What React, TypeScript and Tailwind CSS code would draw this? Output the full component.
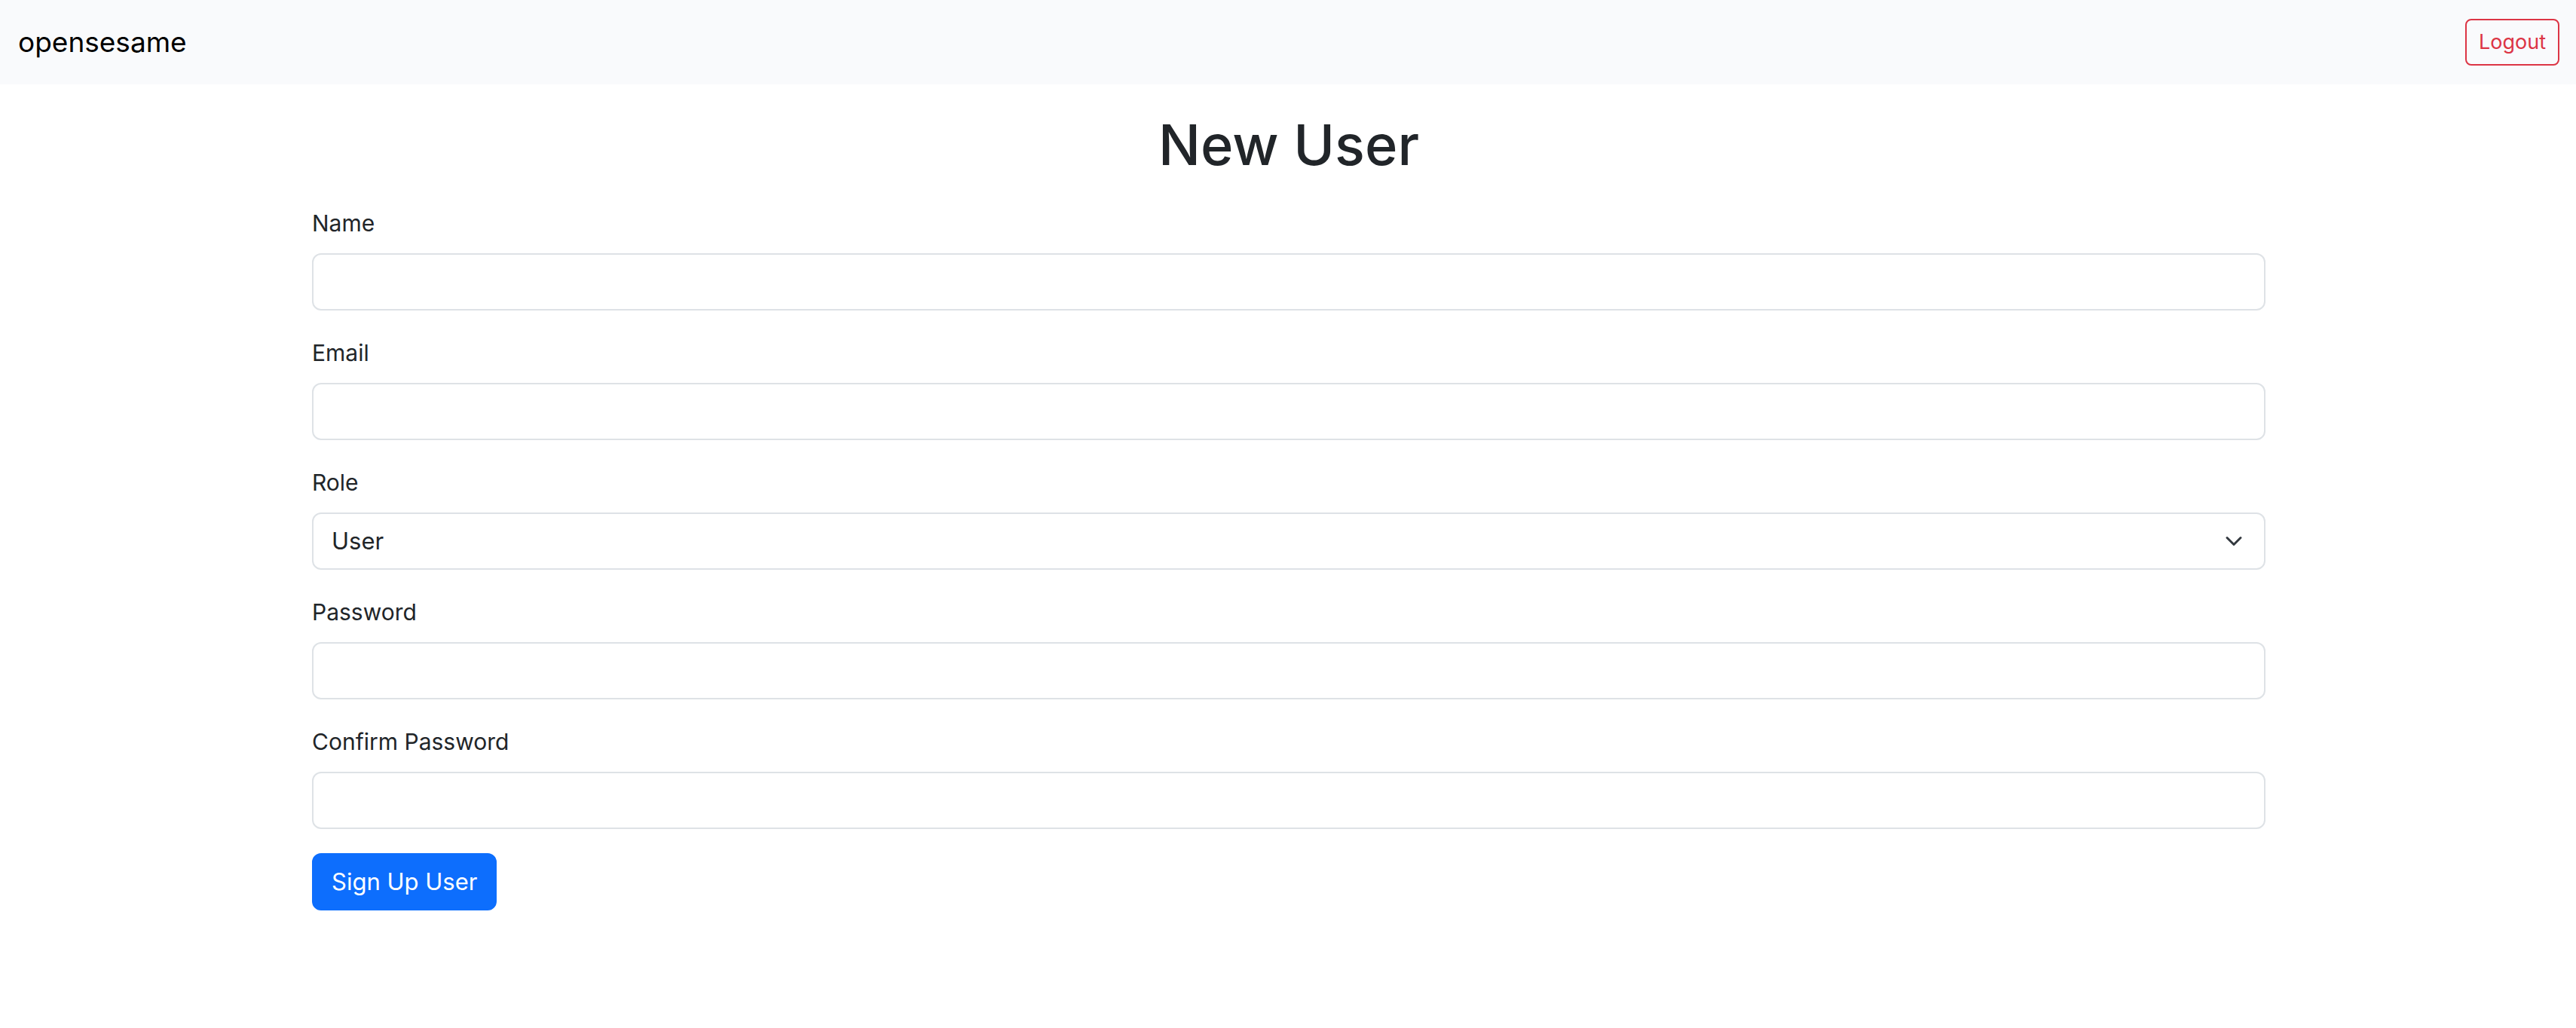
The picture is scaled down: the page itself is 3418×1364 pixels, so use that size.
import React from "react";

interface FieldProps {
  id: string;
  label: string;
  children: React.ReactNode;
}

const controlClass =
  "h-[76px] w-full rounded-xl border-2 border-[#dee2e6] bg-white px-6 text-[31px] leading-[48px] text-[#212529]";

const Field = ({ id, label, children }: FieldProps) => {
  return (
    <div className="mb-8">
      <label htmlFor={id} className="mb-4 block text-[30px] leading-[48px]">
        {label}
      </label>
      {children}
    </div>
  );
};

const RoleSelect = () => {
  return (
    <div className="relative">
      <select
        id="role"
        name="role"
        defaultValue="user"
        className={`${controlClass} appearance-none pr-18`}
      >
        <option value="user">User</option>
        <option value="admin">Admin</option>
      </select>
      <svg
        viewBox="0 0 16 16"
        fill="none"
        stroke="#343a40"
        strokeWidth="2"
        strokeLinecap="round"
        strokeLinejoin="round"
        className="pointer-events-none absolute inset-y-0 right-[30px] my-auto size-6"
        aria-hidden="true"
      >
        <path d="m2 5 6 6 6-6" />
      </svg>
    </div>
  );
};

const Navbar = () => {
  return (
    <nav className="flex items-center justify-between bg-[#f9fafc] py-4 pr-[22px] pl-6">
      <a href="#" className="py-2.5 text-[37px] leading-[60px] text-black">
        opensesame
      </a>
      <button
        type="button"
        className="rounded-lg border-2 border-[#dc3545] px-4 py-2 text-[27px] leading-[42px] text-[#dc3545]"
      >
        Logout
      </button>
    </nav>
  );
};

export default function App() {
  return (
    <div className="min-h-screen bg-white font-['Inter',sans-serif] text-[31px] leading-[48px] text-[#212529]">
      <Navbar />
      <main className="pt-8 pl-0.5">
        <div className="mx-auto max-w-[2640px] px-6">
          <h1 className="mb-8 text-center text-[74px] leading-[96px] font-medium">
            New User
          </h1>
          <form onSubmit={(e) => e.preventDefault()}>
            <Field id="name" label="Name">
              <input id="name" name="name" type="text" className={controlClass} />
            </Field>
            <Field id="email" label="Email">
              <input id="email" name="email" type="email" className={controlClass} />
            </Field>
            <Field id="role" label="Role">
              <RoleSelect />
            </Field>
            <Field id="password" label="Password">
              <input id="password" name="password" type="password" className={controlClass} />
            </Field>
            <Field id="confirm" label="Confirm Password">
              <input id="confirm" name="confirm" type="password" className={controlClass} />
            </Field>
            <button
              type="submit"
              className="rounded-xl border-2 border-[#0d6efd] bg-[#0d6efd] px-6 py-3 text-white"
            >
              Sign Up User
            </button>
          </form>
        </div>
      </main>
    </div>
  );
}
